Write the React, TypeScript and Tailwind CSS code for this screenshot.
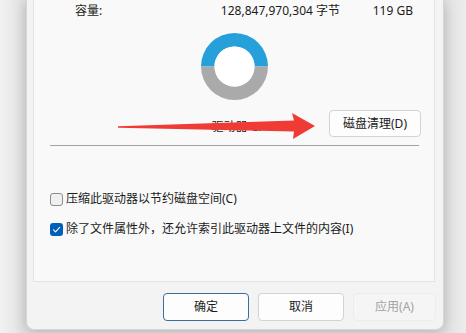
export default function App() {
  return (
    <div className="relative w-[466px] h-[333px] overflow-hidden bg-[linear-gradient(90deg,#f2f2f2,#e2e2e2_5%,#e2e2e2_95%,#ececec)] font-['Noto_Sans','Noto_Sans_CJK_SC',sans-serif] text-[12px] text-[#1b1b1b]">
      {/* window */}
      <div className="ml-[26px] w-[418px] h-[330px] bg-[#f3f3f3] rounded-b-[8px] border-x border-b border-[#d6d6d6] shadow-[0_2px_14px_rgba(0,0,0,0.22)] flex flex-col">
        {/* tab panel */}
        <div className="ml-[6px] w-[402px] h-[282px] bg-[#f9f9f9] border-x border-b border-[#e3e3e3] flex flex-col">
          <div className="h-[22px] flex items-center">
            <span className="ml-[41px] w-[100px]">容量:</span>
            <span className="w-[165px] text-right">128,847,970,304 字节</span>
            <span className="w-[73px] text-right">119 GB</span>
          </div>

          <div className="mt-[11px] ml-[167px] w-[67px] h-[67px]">
            <svg width="67" height="67" viewBox="0 0 67 67">
              <path d="M0 33.5 A33.5 33.5 0 0 1 67 33.5 L53.5 33.5 A20 20 0 0 0 13.5 33.5 Z" fill="#26a0da" />
              <path d="M0 33.5 A33.5 33.5 0 0 0 67 33.5 L53.5 33.5 A20 20 0 0 1 13.5 33.5 Z" fill="#aaaaaa" />
              <circle cx="33.5" cy="33.5" r="20" fill="#ffffff" />
            </svg>
          </div>

          <div className="mt-[10px] h-[27px] flex">
            <div className="w-[295px] pl-[110px] flex items-end justify-center pb-[1px]">
              <span>驱动器 C:</span>
            </div>
            <button className="w-[92px] h-[27px] bg-[#fdfdfd] border border-[#d3d3d3] rounded-[4px] flex items-center justify-center">
              磁盘清理(D)
            </button>
          </div>

          <div className="mt-[8px] ml-[16px] w-[369px] h-px bg-[#a3a3a3]" />

          <label className="mt-[45px] ml-[16px] h-[16px] flex items-center gap-[3px]">
            <span className="w-[13px] h-[13px] rounded-[3px] border border-[#8c8c8c] bg-[#f0f0f0]" />
            <span>压缩此驱动器以节约磁盘空间(C)</span>
          </label>

          <label className="mt-[14px] ml-[16px] h-[16px] flex items-center gap-[3px]">
            <span className="w-[13px] h-[13px] rounded-[3px] bg-[#005fb8] flex items-center justify-center">
              <svg width="9" height="9" viewBox="0 0 9 9">
                <path d="M1.5 4.8 L3.6 6.8 L7.6 2.4" fill="none" stroke="#ffffff" strokeWidth="1.1" strokeLinecap="round" strokeLinejoin="round" />
              </svg>
            </span>
            <span>除了文件属性外，还允许索引此驱动器上文件的内容(I)</span>
          </label>
        </div>

        {/* footer buttons */}
        <div className="mt-[11px] pr-[7px] flex justify-end gap-[9px]">
          <button className="w-[86px] h-[28px] bg-[#fdfdfd] border border-[#3c6e9c] rounded-[4px] flex items-center justify-center">
            确定
          </button>
          <button className="w-[86px] h-[28px] bg-[#fdfdfd] border border-[#d3d3d3] rounded-[4px] flex items-center justify-center">
            取消
          </button>
          <button className="w-[83px] h-[28px] bg-[#f5f5f5] border border-[#ececec] rounded-[4px] flex items-center justify-center text-[#a3a3a3]">
            应用(A)
          </button>
        </div>
      </div>

      {/* red annotation arrow */}
      <svg className="absolute left-0 top-0" width="466" height="333" viewBox="0 0 466 333">
        <polygon points="118,126.3 118,127.7 294,131.5 293,139 315,126 292,113 294,120.5" fill="#f03a35" />
      </svg>
    </div>
  );
}
